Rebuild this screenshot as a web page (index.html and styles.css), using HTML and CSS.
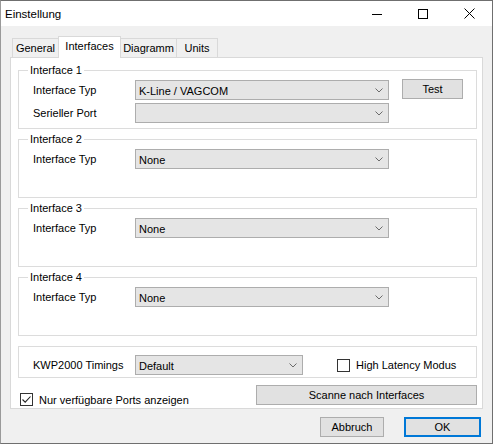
FILE: index.html
```html
<!DOCTYPE html>
<html lang="de">
<head>
<meta charset="utf-8">
<title>Einstellung</title>
<link rel="stylesheet" href="styles.css">
</head>
<body>
<div class="window">
  <div class="titlebar">
    <span class="title">Einstellung</span>
    <div class="caption">
      <span class="cap"><svg width="10" height="10" viewBox="0 0 10 10"><line x1="0" y1="5.5" x2="10" y2="5.5" stroke="#000" stroke-width="1"/></svg></span>
      <span class="cap"><svg width="10" height="10" viewBox="0 0 10 10"><rect x="0.5" y="0.5" width="9" height="9" fill="none" stroke="#000" stroke-width="1"/></svg></span>
      <span class="cap"><svg width="11" height="11" viewBox="0 0 11 11"><path d="M0.5 0.5 L10.5 10.5 M10.5 0.5 L0.5 10.5" stroke="#000" stroke-width="1" fill="none"/></svg></span>
    </div>
  </div>
  <div class="body">
    <div class="tabs">
      <div class="tab t-general">General</div>
      <div class="tab t-interfaces active">Interfaces</div>
      <div class="tab t-diagramm">Diagramm</div>
      <div class="tab t-units">Units</div>
    </div>
    <div class="panel">
      <fieldset class="group">
        <legend>Interface 1</legend>
        <div class="row">
          <span class="lbl">Interface Typ</span>
          <div class="combo wide"><span class="val">K-Line / VAGCOM</span><svg class="chev" width="8" height="5" viewBox="0 0 8 5"><polyline points="0.5,0.5 4,4 7.5,0.5" fill="none" stroke="#6b6b6b" stroke-width="1"/></svg></div>
          <button class="btn test">Test</button>
        </div>
        <div class="row">
          <span class="lbl">Serieller Port</span>
          <div class="combo wide"><span class="val"></span><svg class="chev" width="8" height="5" viewBox="0 0 8 5"><polyline points="0.5,0.5 4,4 7.5,0.5" fill="none" stroke="#6b6b6b" stroke-width="1"/></svg></div>
        </div>
      </fieldset>
      <fieldset class="group">
        <legend>Interface 2</legend>
        <div class="row">
          <span class="lbl">Interface Typ</span>
          <div class="combo wide"><span class="val">None</span><svg class="chev" width="8" height="5" viewBox="0 0 8 5"><polyline points="0.5,0.5 4,4 7.5,0.5" fill="none" stroke="#6b6b6b" stroke-width="1"/></svg></div>
        </div>
      </fieldset>
      <fieldset class="group">
        <legend>Interface 3</legend>
        <div class="row">
          <span class="lbl">Interface Typ</span>
          <div class="combo wide"><span class="val">None</span><svg class="chev" width="8" height="5" viewBox="0 0 8 5"><polyline points="0.5,0.5 4,4 7.5,0.5" fill="none" stroke="#6b6b6b" stroke-width="1"/></svg></div>
        </div>
      </fieldset>
      <fieldset class="group">
        <legend>Interface 4</legend>
        <div class="row">
          <span class="lbl">Interface Typ</span>
          <div class="combo wide"><span class="val">None</span><svg class="chev" width="8" height="5" viewBox="0 0 8 5"><polyline points="0.5,0.5 4,4 7.5,0.5" fill="none" stroke="#6b6b6b" stroke-width="1"/></svg></div>
        </div>
      </fieldset>
      <fieldset class="group kwp">
        <div class="row">
          <span class="lbl">KWP2000 Timings</span>
          <div class="combo short"><span class="val">Default</span><svg class="chev" width="8" height="5" viewBox="0 0 8 5"><polyline points="0.5,0.5 4,4 7.5,0.5" fill="none" stroke="#6b6b6b" stroke-width="1"/></svg></div>
          <label class="check latency"><span class="box"></span>High Latency Modus</label>
        </div>
      </fieldset>
      <div class="bottom-row">
        <label class="check ports"><span class="box"><svg width="11" height="11" viewBox="0 0 11 11"><polyline points="1.5,5.5 4.2,8.2 9.5,2.5" fill="none" stroke="#222" stroke-width="1.1"/></svg></span>Nur verfügbare Ports anzeigen</label>
        <button class="btn scan">Scanne nach Interfaces</button>
      </div>
    </div>
    <div class="dialog-buttons">
      <button class="btn cancel">Abbruch</button>
      <button class="btn ok">OK</button>
    </div>
  </div>
</div>
</body>
</html>
```

FILE: styles.css
```css
* { box-sizing: border-box; }

html, body {
  margin: 0;
  padding: 0;
  background: #f0f0f0;
}

body {
  font-family: "Liberation Sans", Arial, sans-serif;
  font-size: 11px;
  color: #000;
}

.window {
  width: 493px;
  height: 444px;
  border: 1px solid #6f6f6f;
  border-left-color: #9a9a9a;
  background: #f0f0f0;
  display: flex;
  flex-direction: column;
  overflow: hidden;
}

.titlebar {
  height: 25px;
  background: #ffffff;
  display: flex;
  align-items: center;
  justify-content: space-between;
  flex-shrink: 0;
}

.title {
  padding-left: 4px;
  font-size: 11.5px;
}

.caption {
  display: flex;
  height: 25px;
}

.cap {
  width: 46px;
  display: flex;
  align-items: center;
  justify-content: center;
}

.body {
  flex: 1;
  padding: 10px 9px 0 9px;
  display: flex;
  flex-direction: column;
}

.tabs {
  display: flex;
  align-items: flex-end;
  height: 21px;
  padding-left: 2px;
  position: relative;
  z-index: 1;
}

.tab {
  height: 19px;
  border: 1px solid #d9d9d9;
  border-bottom: none;
  background: #f0f0f0;
  line-height: 18px;
  text-align: center;
  margin-left: -1px;
}

.t-general { width: 47px; margin-left: 0; }
.t-interfaces { width: 63px; }
.t-diagramm { width: 57px; }
.t-units { width: 42px; }

.tab.active {
  height: 22px;
  margin-bottom: -1px;
  background: #ffffff;
  line-height: 19px;
  position: relative;
  z-index: 2;
}

.panel {
  background: #ffffff;
  border: 1px solid #d9d9d9;
  padding: 5px 5px 3px 7px;
  display: flex;
  flex-direction: column;
}

.group {
  margin: 0 0 3px 0;
  padding: 0 0 0 14px;
  border: 1px solid #dcdcdc;
  height: 66px;
  min-width: 0;
}

.group legend {
  margin-left: -5px;
  padding: 0 2px;
  line-height: 14px;
  height: 14px;
}

.group .row:first-of-type {
  margin-top: 3px;
}

.row {
  display: flex;
  align-items: center;
  height: 20px;
  margin-bottom: 3px;
}

.lbl {
  width: 102px;
  flex-shrink: 0;
}

.combo {
  height: 20px;
  background: #e5e5e5;
  border: 1px solid #adadad;
  display: flex;
  align-items: center;
  justify-content: space-between;
  padding: 0 5px 0 3px;
  flex-shrink: 0;
}

.combo .val {
  padding-top: 1px;
}

.combo .chev {
  display: block;
}

.combo.wide { width: 254px; }
.combo.short { width: 168px; }

.btn {
  font-family: inherit;
  font-size: 11px;
  color: #000;
  background: #e1e1e1;
  border: 1px solid #adadad;
  border-radius: 0;
  padding: 0;
  height: 20px;
  margin: 0;
}

.test {
  width: 61px;
  margin-left: 13px;
  margin-top: -2px;
}

.kwp {
  margin-top: 7px;
  margin-bottom: 0;
  height: 32px;
  padding-top: 8px;
}

.kwp .row:first-of-type {
  margin-top: 0;
}

.check {
  display: flex;
  align-items: center;
}

.box {
  width: 13px;
  height: 13px;
  border: 1px solid #333333;
  background: #ffffff;
  display: flex;
  align-items: center;
  justify-content: center;
  margin-right: 6px;
  flex-shrink: 0;
}

.latency {
  margin-left: 34px;
}

.bottom-row {
  display: flex;
  align-items: center;
  justify-content: space-between;
  margin-top: 7px;
  height: 20px;
  padding-left: 2px;
}

.ports {
  padding-top: 9px;
}

.scan {
  width: 221px;
}

.dialog-buttons {
  display: flex;
  justify-content: flex-end;
  gap: 20px;
  margin-top: 8px;
  padding-right: 2px;
}

.cancel { width: 64px; }

.ok {
  width: 77px;
  border: 2px solid #0078d7;
}
```
